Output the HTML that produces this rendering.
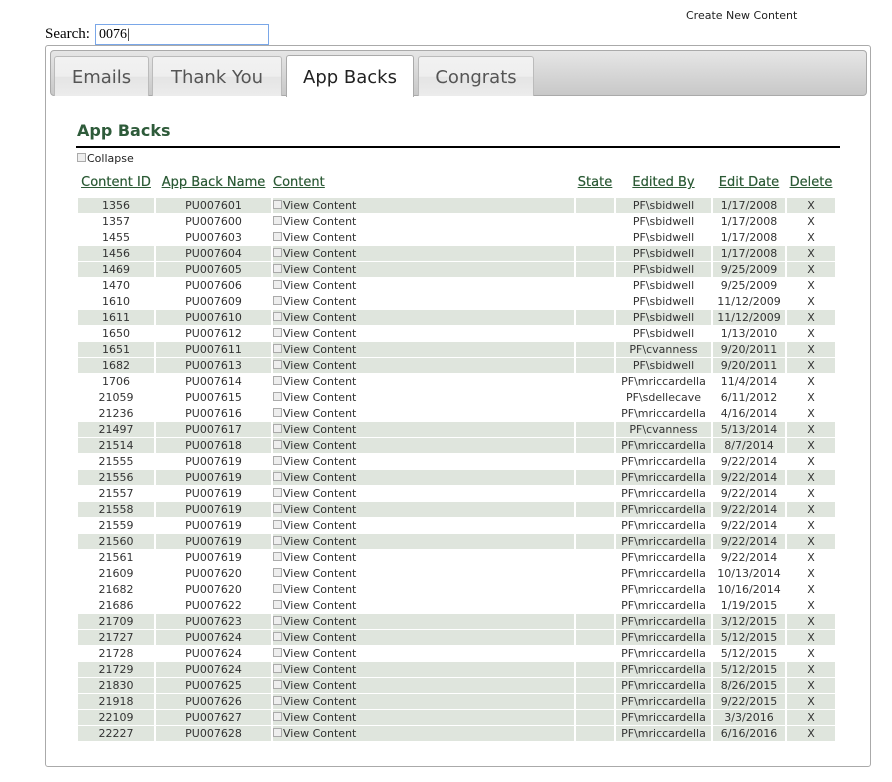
<!DOCTYPE html>
<html><head><meta charset="utf-8">
<style>
body{margin:0;background:#fff;font-family:"DejaVu Sans",Verdana,sans-serif;color:#333;position:relative;width:892px;height:782px;overflow:hidden}
.abs{position:absolute}
#create{left:686px;top:9px;font-size:11px;color:#222}
#search{left:45px;top:26px;font-family:"Liberation Serif",serif;font-size:15px;color:#000}
#inp{left:95px;top:24px;width:174px;height:21px;border:1px solid #7aa7e8;box-sizing:border-box;font-family:"Liberation Serif",serif;font-size:14px;padding:1px 3px;color:#000;line-height:17px}
#box{left:45px;top:45px;width:826px;height:722px;border:1px solid #aaa;border-radius:3px;box-sizing:border-box}
#bar{left:50px;top:50px;width:817px;height:46px;border:1px solid #aaa;border-radius:4px;box-sizing:border-box;background:linear-gradient(#e6e6e6,#c8c8c8)}
.tab{position:absolute;top:56px;height:40px;border:1px solid #bbb;border-bottom:none;border-radius:3px 3px 0 0;box-sizing:border-box;background:linear-gradient(#f2f2f2 0,#eee 50%,#e4e4e4 51%,#ececec 100%);font-size:18px;color:#555;text-align:center;line-height:42px}
.tab.act{background:#fff;color:#222;height:42px;top:55px;border-color:#aaa;line-height:43px}
#h{left:77px;top:121px;font-size:16px;font-weight:bold;color:#2e5b3a}
#line{left:76px;top:146px;width:764px;height:2px;background:#000}
#col{left:77px;top:152px;font-size:11px;color:#222}
.cb{display:inline-block;width:7px;height:7px;border:1px solid #aaa;background:#eee;margin-right:1px;vertical-align:0}
table{position:absolute;left:76px;top:174px;border-collapse:separate;border-spacing:2px 1px;font-size:11px}
th{font-weight:normal;font-size:13px;color:#2b5a35;text-decoration:underline;height:22px;padding:0 0 0;vertical-align:top;text-shadow:0 0 0.4px #2b5a35}
td{height:15px;padding:0;line-height:15px;text-align:center;white-space:nowrap}
tr.s td{background:#dfe5dd}
td.c{text-align:left}
</style></head><body>
<div class="abs" id="create">Create New Content</div>
<div class="abs" id="search">Search:</div>
<div class="abs" id="inp">0076|</div>
<div class="abs" id="box"></div>
<div class="abs" id="bar"></div>
<div class="tab" style="left:54px;width:95px">Emails</div>
<div class="tab" style="left:152px;width:130px">Thank You</div>
<div class="tab act" style="left:286px;width:128px">App Backs</div>
<div class="tab" style="left:418px;width:116px">Congrats</div>
<div class="abs" id="h">App Backs</div>
<div class="abs" id="line"></div>
<div class="abs" id="col"><span class="cb"></span>Collapse</div>
<table>
<colgroup><col style="width:76px"><col style="width:115px"><col style="width:301px"><col style="width:38px"><col style="width:95px"><col style="width:72px"><col style="width:48px"></colgroup>
<tr><th>Content ID</th><th>App Back Name</th><th style="text-align:left">Content</th><th>State</th><th>Edited By</th><th>Edit Date</th><th>Delete</th></tr>
<tr class="s"><td>1356</td><td>PU007601</td><td class="c"><span class="cb"></span>View Content</td><td></td><td>PF\sbidwell</td><td>1/17/2008</td><td>X</td></tr>
<tr><td>1357</td><td>PU007600</td><td class="c"><span class="cb"></span>View Content</td><td></td><td>PF\sbidwell</td><td>1/17/2008</td><td>X</td></tr>
<tr><td>1455</td><td>PU007603</td><td class="c"><span class="cb"></span>View Content</td><td></td><td>PF\sbidwell</td><td>1/17/2008</td><td>X</td></tr>
<tr class="s"><td>1456</td><td>PU007604</td><td class="c"><span class="cb"></span>View Content</td><td></td><td>PF\sbidwell</td><td>1/17/2008</td><td>X</td></tr>
<tr class="s"><td>1469</td><td>PU007605</td><td class="c"><span class="cb"></span>View Content</td><td></td><td>PF\sbidwell</td><td>9/25/2009</td><td>X</td></tr>
<tr><td>1470</td><td>PU007606</td><td class="c"><span class="cb"></span>View Content</td><td></td><td>PF\sbidwell</td><td>9/25/2009</td><td>X</td></tr>
<tr><td>1610</td><td>PU007609</td><td class="c"><span class="cb"></span>View Content</td><td></td><td>PF\sbidwell</td><td>11/12/2009</td><td>X</td></tr>
<tr class="s"><td>1611</td><td>PU007610</td><td class="c"><span class="cb"></span>View Content</td><td></td><td>PF\sbidwell</td><td>11/12/2009</td><td>X</td></tr>
<tr><td>1650</td><td>PU007612</td><td class="c"><span class="cb"></span>View Content</td><td></td><td>PF\sbidwell</td><td>1/13/2010</td><td>X</td></tr>
<tr class="s"><td>1651</td><td>PU007611</td><td class="c"><span class="cb"></span>View Content</td><td></td><td>PF\cvanness</td><td>9/20/2011</td><td>X</td></tr>
<tr class="s"><td>1682</td><td>PU007613</td><td class="c"><span class="cb"></span>View Content</td><td></td><td>PF\sbidwell</td><td>9/20/2011</td><td>X</td></tr>
<tr><td>1706</td><td>PU007614</td><td class="c"><span class="cb"></span>View Content</td><td></td><td>PF\mriccardella</td><td>11/4/2014</td><td>X</td></tr>
<tr><td>21059</td><td>PU007615</td><td class="c"><span class="cb"></span>View Content</td><td></td><td>PF\sdellecave</td><td>6/11/2012</td><td>X</td></tr>
<tr><td>21236</td><td>PU007616</td><td class="c"><span class="cb"></span>View Content</td><td></td><td>PF\mriccardella</td><td>4/16/2014</td><td>X</td></tr>
<tr class="s"><td>21497</td><td>PU007617</td><td class="c"><span class="cb"></span>View Content</td><td></td><td>PF\cvanness</td><td>5/13/2014</td><td>X</td></tr>
<tr class="s"><td>21514</td><td>PU007618</td><td class="c"><span class="cb"></span>View Content</td><td></td><td>PF\mriccardella</td><td>8/7/2014</td><td>X</td></tr>
<tr><td>21555</td><td>PU007619</td><td class="c"><span class="cb"></span>View Content</td><td></td><td>PF\mriccardella</td><td>9/22/2014</td><td>X</td></tr>
<tr class="s"><td>21556</td><td>PU007619</td><td class="c"><span class="cb"></span>View Content</td><td></td><td>PF\mriccardella</td><td>9/22/2014</td><td>X</td></tr>
<tr><td>21557</td><td>PU007619</td><td class="c"><span class="cb"></span>View Content</td><td></td><td>PF\mriccardella</td><td>9/22/2014</td><td>X</td></tr>
<tr class="s"><td>21558</td><td>PU007619</td><td class="c"><span class="cb"></span>View Content</td><td></td><td>PF\mriccardella</td><td>9/22/2014</td><td>X</td></tr>
<tr><td>21559</td><td>PU007619</td><td class="c"><span class="cb"></span>View Content</td><td></td><td>PF\mriccardella</td><td>9/22/2014</td><td>X</td></tr>
<tr class="s"><td>21560</td><td>PU007619</td><td class="c"><span class="cb"></span>View Content</td><td></td><td>PF\mriccardella</td><td>9/22/2014</td><td>X</td></tr>
<tr><td>21561</td><td>PU007619</td><td class="c"><span class="cb"></span>View Content</td><td></td><td>PF\mriccardella</td><td>9/22/2014</td><td>X</td></tr>
<tr><td>21609</td><td>PU007620</td><td class="c"><span class="cb"></span>View Content</td><td></td><td>PF\mriccardella</td><td>10/13/2014</td><td>X</td></tr>
<tr><td>21682</td><td>PU007620</td><td class="c"><span class="cb"></span>View Content</td><td></td><td>PF\mriccardella</td><td>10/16/2014</td><td>X</td></tr>
<tr><td>21686</td><td>PU007622</td><td class="c"><span class="cb"></span>View Content</td><td></td><td>PF\mriccardella</td><td>1/19/2015</td><td>X</td></tr>
<tr class="s"><td>21709</td><td>PU007623</td><td class="c"><span class="cb"></span>View Content</td><td></td><td>PF\mriccardella</td><td>3/12/2015</td><td>X</td></tr>
<tr class="s"><td>21727</td><td>PU007624</td><td class="c"><span class="cb"></span>View Content</td><td></td><td>PF\mriccardella</td><td>5/12/2015</td><td>X</td></tr>
<tr><td>21728</td><td>PU007624</td><td class="c"><span class="cb"></span>View Content</td><td></td><td>PF\mriccardella</td><td>5/12/2015</td><td>X</td></tr>
<tr class="s"><td>21729</td><td>PU007624</td><td class="c"><span class="cb"></span>View Content</td><td></td><td>PF\mriccardella</td><td>5/12/2015</td><td>X</td></tr>
<tr class="s"><td>21830</td><td>PU007625</td><td class="c"><span class="cb"></span>View Content</td><td></td><td>PF\mriccardella</td><td>8/26/2015</td><td>X</td></tr>
<tr class="s"><td>21918</td><td>PU007626</td><td class="c"><span class="cb"></span>View Content</td><td></td><td>PF\mriccardella</td><td>9/22/2015</td><td>X</td></tr>
<tr class="s"><td>22109</td><td>PU007627</td><td class="c"><span class="cb"></span>View Content</td><td></td><td>PF\mriccardella</td><td>3/3/2016</td><td>X</td></tr>
<tr class="s"><td>22227</td><td>PU007628</td><td class="c"><span class="cb"></span>View Content</td><td></td><td>PF\mriccardella</td><td>6/16/2016</td><td>X</td></tr>
</table>
</body></html>
